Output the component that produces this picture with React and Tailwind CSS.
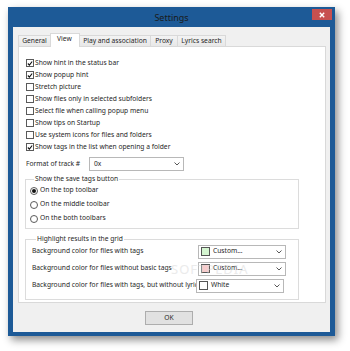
import React from "react";

function Check({ checked, label }) {
  return (
    <div className="h-[12px] flex items-center gap-[1px]">
      <div className="w-[8px] h-[8px] border border-[#5a5a5a] bg-white flex items-center justify-center">
        {checked && (
          <svg width="7" height="7" viewBox="0 0 7 7">
            <path d="M1 3.5 L2.8 5.3 L6 1.2" stroke="#111" strokeWidth="1.3" fill="none" />
          </svg>
        )}
      </div>
      <span className="whitespace-nowrap">{label}</span>
    </div>
  );
}

function Radio({ checked, label }) {
  return (
    <div className="h-[14px] flex items-center gap-[2px]">
      <div className="w-[8px] h-[8px] rounded-full border border-[#5a5a5a] bg-white flex items-center justify-center">
        {checked && <div className="w-[4px] h-[4px] rounded-full bg-[#111]" />}
      </div>
      <span className="whitespace-nowrap">{label}</span>
    </div>
  );
}

function Chevron() {
  return (
    <svg width="6" height="4" viewBox="0 0 6 4" className="ml-auto mr-[3px] shrink-0">
      <path d="M0.5 0.5 L3 3 L5.5 0.5" stroke="#444" strokeWidth="0.9" fill="none" />
    </svg>
  );
}

function ColorCombo({ color, label }) {
  return (
    <div className="w-[88px] h-[14px] shrink-0 border border-[#b8b8b8] bg-white flex items-center">
      <div className="ml-[2px] w-[9px] h-[9px] border border-[#555]" style={{ background: color }} />
      <span className="ml-[3px] whitespace-nowrap">{label}</span>
      <Chevron />
    </div>
  );
}

const tabBase =
  "h-[11px] flex items-center justify-center whitespace-nowrap border border-b-0 border-[#d9d9d9] bg-gradient-to-b from-[#f3f3f3] to-[#e8e8e8] -ml-px";

export default function App() {
  return (
    <div
      className="w-[350px] h-[351px] bg-white pl-[8px] pt-[7px] text-[6.7px] leading-none text-[#262626]"
      style={{ fontFamily: '"Noto Sans", "Open Sans", sans-serif' }}
    >
      <div className="w-[327px] h-[329px] bg-[#1d5a97] flex flex-col shadow-[3px_4px_8px_rgba(0,0,0,0.45)]">
        {/* Title bar */}
        <div className="h-[20px] relative flex items-center justify-center">
          <span className="text-[9px] text-[#1a1a1a]">Settings</span>
          <div className="absolute right-[3px] top-[2px] w-[20px] h-[11px] bg-[#c75050] flex items-center justify-center">
            <svg width="6" height="6" viewBox="0 0 6 6">
              <path d="M0.8 0.8 L5.2 5.2 M5.2 0.8 L0.8 5.2" stroke="#fff" strokeWidth="1.4" />
            </svg>
          </div>
        </div>

        {/* Client area */}
        <div className="mx-[5px] mb-[4px] flex-1 bg-[#f0f0f0] flex flex-col relative">
          {/* Tabs */}
          <div className="pl-[5px] pt-[6px] flex items-end relative z-10">
            <div className={tabBase + " ml-0 w-[33px]"}>General</div>
            <div className="h-[14px] w-[30px] -ml-px -mb-px border border-b-0 border-[#d9d9d9] bg-white flex items-start pt-[2px] pl-[6px]">
              View
            </div>
            <div className={tabBase + " w-[72px]"}>Play and association</div>
            <div className={tabBase + " w-[28px]"}>Proxy</div>
            <div className={tabBase + " w-[49px]"}>Lyrics search</div>
          </div>

          {/* Panel */}
          <div className="ml-[5px] w-[308px] h-[257px] bg-white border border-[#d9d9d9] pl-[7px] pt-[10px] flex flex-col relative">
            <Check checked label="Show hint in the status bar" />
            <Check checked label="Show popup hint" />
            <Check label="Stretch picture" />
            <Check label="Show files only in selected subfolders" />
            <Check label="Select file when calling popup menu" />
            <Check label="Show tips on Startup" />
            <Check label="Use system icons for files and folders" />
            <Check checked label="Show tags in the list when opening a folder" />

            <div className="mt-[4px] h-[14px] flex items-center">
              <span className="w-[63px] whitespace-nowrap">Format of track #</span>
              <div className="w-[95px] h-[14px] border border-[#b8b8b8] bg-white flex items-center pl-[4px]">
                <span>0x</span>
                <Chevron />
              </div>
            </div>

            <fieldset className="mt-[5px] -ml-px w-[274px] h-[53px] border border-[#dcdcdc] pl-[4px]">
              <legend className="ml-[4px] px-[1px]">Show the save tags button</legend>
              <div className="flex flex-col mt-[1px]">
                <Radio checked label="On the top toolbar" />
                <Radio label="On the middle toolbar" />
                <Radio label="On the both toolbars" />
              </div>
            </fieldset>

            <fieldset className="mt-[7px] -ml-px w-[274px] h-[64px] border border-[#dcdcdc] pl-[6px]">
              <legend className="ml-[4px] px-[1px]">Highlight results in the grid</legend>
              <div className="flex flex-col gap-[3px] mt-[2px]">
                <div className="flex items-center justify-between pr-[12px]">
                  <span className="whitespace-nowrap">Background color for files with tags</span>
                  <ColorCombo color="#d4f5d0" label="Custom..." />
                </div>
                <div className="flex items-center justify-between pr-[12px]">
                  <span className="whitespace-nowrap">Background color for files without basic tags</span>
                  <ColorCombo color="#f6cccc" label="Custom..." />
                </div>
                <div className="flex items-center pr-[12px]">
                  <span className="w-[164px] overflow-hidden whitespace-nowrap">Background color for files with tags, but without lyric</span>
                  <ColorCombo color="#ffffff" label="White" />
                </div>
              </div>
            </fieldset>

            <div className="absolute left-[152px] top-[216px] text-[13px] tracking-[1px] text-[#d8d8d8] opacity-50 pointer-events-none">
              SOFTPEDIA
            </div>
          </div>

          {/* OK button */}
          <div className="mt-[8px] ml-[132px] w-[48px] h-[14px] border border-[#adadad] bg-[#e1e1e1] flex items-center justify-center">
            OK
          </div>
        </div>
      </div>
    </div>
  );
}
